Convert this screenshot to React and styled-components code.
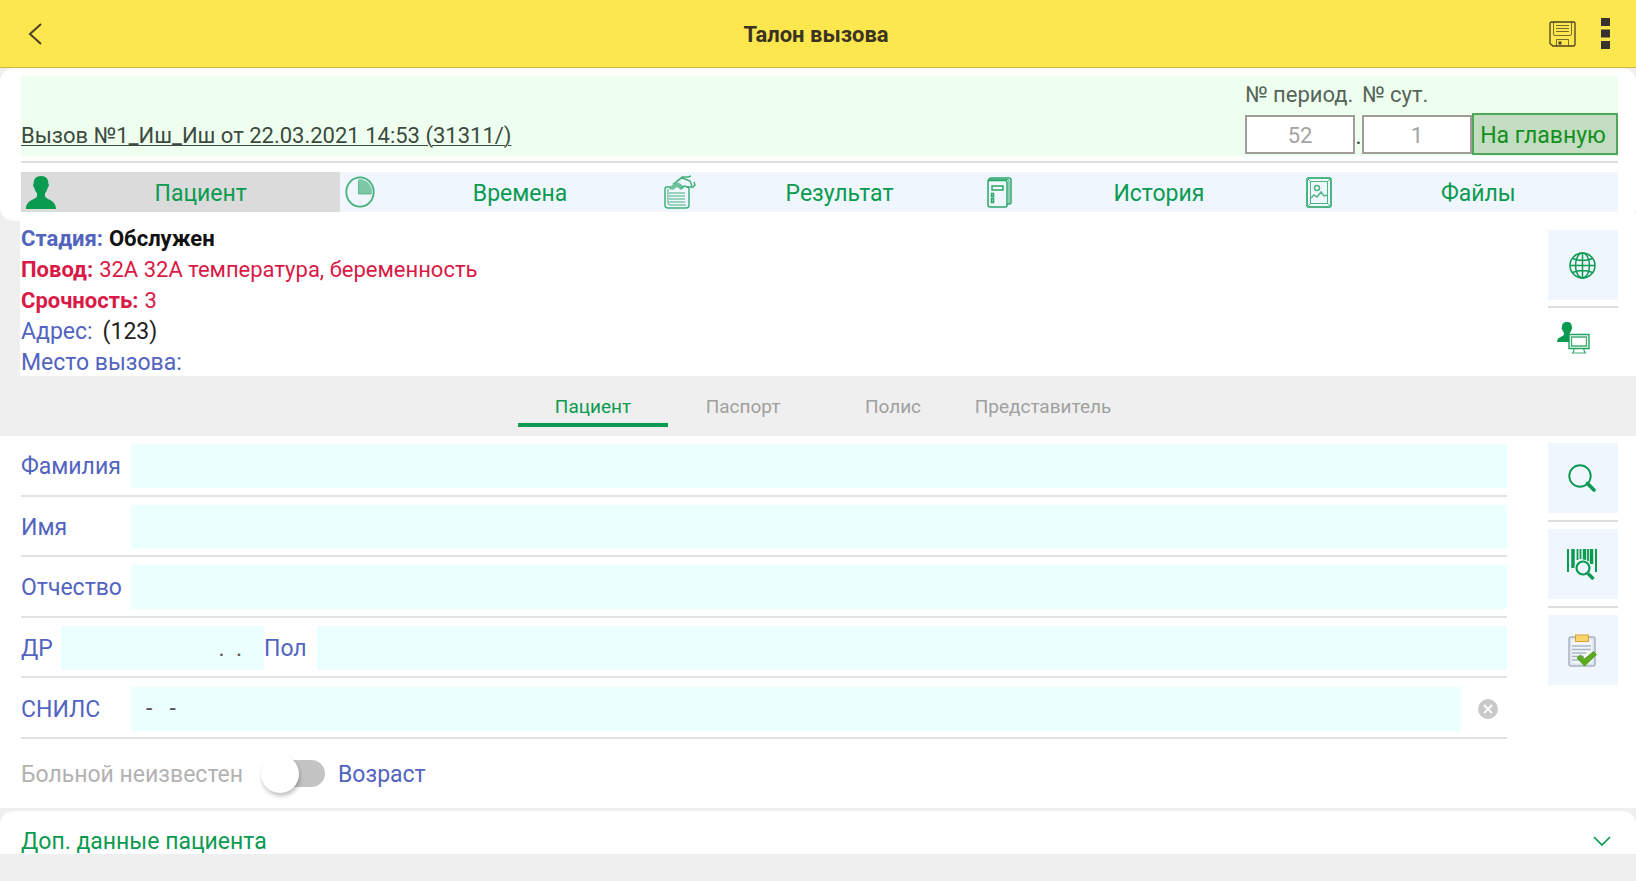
import React from "react";
import styled, { createGlobalStyle, css } from "styled-components";

const GREEN = "#0a9a50";
const BLUE = "#5264c0";
const RED = "#d91a46";

const Global = createGlobalStyle`
  *, *::before, *::after { box-sizing: border-box; }
  body {
    margin: 0;
    min-height: 100vh;
    background: #efefef;
    font-family: Roboto, "Open Sans", sans-serif;
    font-size: 23px;
    color: #3c4a40;
  }
  button, input { font: inherit; color: inherit; margin: 0; border: 0; padding: 0; border-radius: 0; background: none; }
  button { cursor: pointer; }
  svg { display: block; flex: none; }
`;

const AppBar = styled.header`
  display: grid;
  grid-template-columns: 1fr auto 1fr;
  align-items: center;
  height: 68px;
  padding: 0 26px 0 22px;
  background: #fde74f;
  border-bottom: 1px solid #cfb648;
`;
const Title = styled.h1`
  margin: 0;
  padding-top: 2px;
  font-size: 22px;
  font-weight: 700;
  color: #3b3322;
`;
const BarButton = styled.button`
  justify-self: start;
  display: flex;
  padding: 0 6px;
  color: #4c4022;
`;
const BarActions = styled.div`
  justify-self: end;
  display: flex;
  align-items: center;
  gap: 19px;
`;
const MenuButton = styled(BarButton)`
  padding: 0;
  color: #38322f;
`;

const CallCard = styled.section`
  padding: 8px 18px 9px 21px;
  background: #fff;
  border-radius: 14px;
`;
const CallHead = styled.div`
  display: flex;
  justify-content: space-between;
  align-items: flex-end;
  height: 80px;
  background: #efffef;
`;
const CallLink = styled.a`
  padding-bottom: 6px;
  font-size: 22px;
  line-height: 28px;
  color: #3c4a40;
  text-decoration: underline;
  text-decoration-thickness: 1px;
  text-underline-offset: 2px;
`;
const Numbers = styled.div`
  display: flex;
  align-items: flex-end;
  padding-bottom: 1px;
`;
const NumberField = styled.label`
  display: flex;
  flex-direction: column;
  gap: 6px;
  width: 110px;
  padding-bottom: 1px;
  font-size: 22px;
  line-height: 28px;
  white-space: nowrap;
  color: #56645a;
`;
const NumberInput = styled.input`
  width: 100%;
  height: 39px;
  padding-top: 2px;
  background: #fff;
  border: 2px solid #a19c9a;
  text-align: center;
  color: #a3a3a3;
`;
const Dot = styled.span`
  width: 7px;
  line-height: 36px;
  text-align: center;
`;
const HomeButton = styled.button`
  width: 146px;
  height: 42px;
  padding: 2px 4px 0 0;
  background: #c3ddc2;
  border: 2px solid #4fa85a;
  color: #12901c;
`;
const Rule = styled.hr`
  margin: 5px 0 0;
  border: 0;
  border-top: 2px solid #dedede;
`;
const MainTabs = styled.nav`
  display: grid;
  grid-template-columns: repeat(5, 1fr);
  margin-top: 9px;
  background: #eff6fe;
`;
const MainTab = styled.button`
  display: flex;
  align-items: center;
  height: 40px;
  color: ${GREEN};
  background: ${(p) => (p.$active ? "#dbdbdb" : "transparent")};
`;
const TabIcon = styled.span`
  display: flex;
  justify-content: center;
  width: 40px;
`;
const TabText = styled.span`
  flex: 1;
  padding-top: 2px;
`;

const Info = styled.section`
  display: flex;
  justify-content: space-between;
  height: 163px;
  margin: -8px 0 0 20px;
  padding: 10px 18px 0 1px;
  background: #fff;
`;
const Facts = styled.dl`
  margin: 0;
  line-height: 31px;
`;
const Fact = styled.div`
  display: flex;
  gap: ${(p) => (p.$plain ? 10 : 6)}px;
  font-size: ${(p) => (p.$plain ? 23 : 22)}px;
  color: ${(p) => p.$color};
`;
const Term = styled.dt`
  font-weight: ${(p) => (p.$bold ? 700 : 400)};
`;
const Value = styled.dd`
  margin: 0;
  font-weight: ${(p) => (p.$bold ? 700 : 400)};
  color: ${(p) => p.$color || "inherit"};
`;

const SideColumn = styled.div`
  display: flex;
  flex-direction: column;
  width: 70px;
  padding-top: 7px;
`;
const SideButton = styled.button`
  display: flex;
  align-items: center;
  justify-content: center;
  height: 70px;
  padding: 0 2px 0 0;
  color: ${GREEN};
  background: ${(p) => (p.$plain ? "transparent" : "#eff6fe")};
  ${(p) => p.$plain && css`height: 60px; padding-right: 20px;`}
`;
const SideRule = styled.hr`
  width: 100%;
  margin: ${(p) => (p.$tight ? "6px 0 0" : "7px 0")};
  border: 0;
  border-top: 2px solid #dedede;
`;

const SubTabs = styled.nav`
  display: flex;
  justify-content: center;
  height: 60px;
  padding: 10px 0 9px;
`;
const SubTab = styled.button`
  width: 150px;
  padding-top: 4px;
  font-size: 19px;
  color: ${(p) => (p.$active ? GREEN : "#a0a0a0")};
  border-bottom: 4px solid ${(p) => (p.$active ? GREEN : "transparent")};
`;

const FormPanel = styled.section`
  display: flex;
  justify-content: space-between;
  min-height: 372px;
  padding: 0 18px 0 21px;
  background: #fff;
`;
const Form = styled.form`
  flex: 1;
  margin-right: 41px;
`;
const Rows = styled.div`
  display: grid;
  grid-template-rows: repeat(5, 1fr);
  min-height: 303px;
`;
const Row = styled.div`
  display: flex;
  align-items: center;
  padding-top: 2px;
  border-bottom: 2px solid #e3e1e1;
`;
const Label = styled.label`
  width: ${(p) => (p.$w ? p.$w : 110)}px;
  padding-top: 1px;
  color: ${BLUE};
`;
const Field = styled.input`
  flex: 1;
  min-width: 0;
  height: 44px;
  padding: 0 15px;
  background: #ecffff;
  color: #555;
`;
const DateField = styled(Field)`
  flex: none;
  width: 203px;
  padding-right: 22px;
  text-align: right;
`;
const ClearButton = styled.button`
  display: flex;
  justify-content: center;
  width: 46px;
  padding-left: 8px;
`;
const SwitchRow = styled.div`
  display: flex;
  align-items: center;
  height: 69px;
`;
const SwitchLabel = styled.label`
  width: 240px;
  padding-top: 2px;
  color: #b2b2b2;
`;
const Switch = styled.input`
  appearance: none;
  display: flex;
  align-items: center;
  width: 52px;
  height: 27px;
  margin: 0 13px 0 12px;
  border-radius: 14px;
  background: #c4c4c4;
  &::before {
    content: "";
    width: 38px;
    height: 38px;
    flex: none;
    margin-left: -12px;
    border-radius: 50%;
    background: #fff;
    box-shadow: 1px 3px 4px rgba(0, 0, 0, 0.25);
  }
`;
const AgeLabel = styled.span`
  padding-top: 2px;
  color: ${BLUE};
`;

const Extra = styled.button`
  display: flex;
  justify-content: space-between;
  align-items: center;
  width: 100%;
  height: 43px;
  margin-top: 3px;
  padding: 18px 25px 0 21px;
  overflow: hidden;
  line-height: 28px;
  color: ${GREEN};
  background: #fff;
  border-radius: 14px 14px 0 0;
`;

const line = { fill: "none", stroke: "currentColor" };

const BackIcon = () => (
  <svg width="15" height="22" viewBox="0 0 15 22" {...line} strokeWidth="2"><path d="M13 1 2 11l11 10" /></svg>
);
const SaveIcon = () => (
  <svg width="27" height="26" viewBox="0 0 27 26" {...line}>
    <path d="M2.500 1h22a1.500 1.500 0 0 1 1.500 1.500v21a1.500 1.500 0 0 1-1.500 1.500H4L1 22.500v-20A1.500 1.500 0 0 1 2.500 1Z" strokeWidth="1.300" />
    <path d="M4.500 1v12q0 1.500 1.500 1.500h15q1.500 0 1.500-1.500V1M7 4.500h13M7 7.500h13M7 10.500h13M7.500 25v-6.500h12V25" strokeWidth="1" opacity=".75" />
    <path d="M9.500 20.500h3v3h-3z" fill="currentColor" stroke="none" />
  </svg>
);
const DotsIcon = () => (
  <svg width="9" height="31" viewBox="0 0 9 31" fill="currentColor"><path d="M0 0h9v8H0zM0 11.500h9v8H0zM0 23h9v8H0z" /></svg>
);
const PersonIcon = () => (
  <svg width="30" height="33" viewBox="0 0 30 33" fill="currentColor">
    <path d="M15 0c5 0 7.500 3 7.300 7.500 1 .5.700 3.500-.6 4.200-.6 3-1.700 4.400-2.700 5.500v3c1.500 3.800 10.500 3 11 12.800H0c.5-9.800 9.500-9 11-12.800v-3c-1-1.100-2.100-2.500-2.700-5.500-1.300-.7-1.600-3.700-.6-4.200C7.500 3 10 0 15 0Z" />
  </svg>
);
const ClockIcon = () => (
  <svg width="30" height="32" viewBox="0 0 30 32" {...line}>
    <ellipse cx="15" cy="16" rx="13.700" ry="14.700" strokeWidth="1.800" opacity=".75" />
    <path d="M13.500 3v15H27C28 9 21 2.500 13.500 3Z" fill="currentColor" stroke="none" opacity=".5" />
    <path d="M13.500 5v13H26" strokeWidth="1" opacity=".5" />
  </svg>
);
const ResultIcon = () => (
  <svg width="32" height="34" viewBox="0 0 32 34" {...line} strokeWidth="1.500" opacity=".75">
    <path d="M7 12H3q-2 0-2 2v16q0 3 3 3h18q3 0 3-3V14q0-2-2-2h-1" />
    <path d="M4 14v14q0 2 2 2h16M5 18h16M5 21h16M5 24h16M5 27h16" strokeWidth="1" />
    <path d="M9 9l6-4 3-3h6l3-1M13 6q4-4 8-2l5 2 2 5M17 13l3-2 4 1h3l1-2M30 7l1 3-3 3" />
    <path d="M5 14l3-4 5-3 4 2 3 4-3 2-4-3-4 3z" fill="currentColor" stroke="none" opacity=".75" />
  </svg>
);
const HistoryIcon = () => (
  <svg width="25" height="31" viewBox="0 0 25 31" {...line} strokeWidth="1.500" opacity=".85">
    <path d="M1 5q0-1.500 1.500-1.500h16q1.500 0 1.500 1.500v23q0 2-2 2H3q-2 0-2-2V5q0-4 4-4h17q2 0 2 2v22q0 2-2 2h-2" />
    <path d="M3 2.300h17q2 0 2 2V26" strokeWidth="1" />
    <path d="M5 9h11v4H5zM4.500 16.500h2v3h-2zM4.500 21.500h2v4h-2z" />
  </svg>
);
const FilesIcon = () => (
  <svg width="26" height="31" viewBox="0 0 26 31" {...line} strokeWidth="1.500" opacity=".7">
    <rect x="1" y="1" width="24" height="29" rx="2" strokeWidth="2" />
    <rect x="4.500" y="4.500" width="17" height="22" strokeWidth="1" />
    <path d="M1 1l4 4M25 1l-4 4M1 30l4-4M25 30l-4-4" strokeWidth="1" />
    <circle cx="11" cy="11" r="2.500" />
    <path d="M5 21l3-3 3 2 4-5 3 4 4-1" />
  </svg>
);
const GlobeIcon = () => (
  <svg width="27" height="27" viewBox="0 0 27 27" {...line} strokeWidth="1.500">
    <circle cx="13.500" cy="13.500" r="12.500" />
    <ellipse cx="13.500" cy="13.500" rx="7" ry="12.500" />
    <path d="M13.500 1v25M1 13.500h25M3.500 6.500q10 4 20 0M3.500 20.500q10-4 20 0" />
  </svg>
);
const WorkstationIcon = () => (
  <svg width="33" height="32" viewBox="0 0 33 32" {...line}>
    <path d="M10 0c3.500 0 5 2 4.800 5 .7.500.4 2.200-.4 2.700-.4 1.800-1 2.500-1.600 3.200V20H0c.3-5.500 6-5 7-7.500v-1.800C6.300 10 5.700 9 5.400 7.700c-.8-.5-1.100-2.200-.4-2.700C5 2 6.500 0 10 0Z" fill="currentColor" stroke="none" />
    <path d="M12 12.500h20v14H12z" fill="#fff" strokeWidth="1.400" opacity=".9" />
    <path d="M14.500 15h15v9h-15z" strokeWidth="1.300" opacity=".8" />
    <path d="M17 27v1.500l-1.500 2.500h13L27 28.500V27" strokeWidth="1.200" opacity=".8" />
  </svg>
);
const SearchIcon = () => (
  <svg width="28" height="28" viewBox="0 0 28 28" {...line}>
    <circle cx="12" cy="12" r="10.700" strokeWidth="1.900" />
    <path d="M19.500 19.500 26 26" strokeWidth="3.600" strokeLinecap="round" />
  </svg>
);
const BarcodeIcon = () => (
  <svg width="30" height="32" viewBox="0 0 30 32" {...line}>
    <path d="M1 1v23M29 1v23" strokeWidth="2" />
    <path d="M6 1v19M24.500 1v15" strokeWidth="3.500" />
    <path d="M10.500 1v11M13.500 1v10M21 1v12" strokeWidth="1.800" />
    <path d="M17.500 1v11" strokeWidth="3.400" />
    <circle cx="16" cy="20" r="8.500" fill="#eff6fe" stroke="none" />
    <circle cx="16" cy="20" r="6.500" strokeWidth="2.200" />
    <path d="M21 25.500 26.500 31" strokeWidth="3.400" />
  </svg>
);
const ChecklistIcon = () => (
  <svg width="29" height="33" viewBox="0 0 29 33" fill="none">
    <rect x="1" y="3" width="26" height="29" rx="2" fill="#dbe4ec" stroke="#a8b4bf" strokeWidth="1.500" />
    <path d="M3.500 5.500h21v24h-21z" fill="#f1f5f8" />
    <path d="M4 12h19M4 15.500h19M4 19h14M4 22.500h12M4 26h8" stroke="#a9b8c4" strokeWidth="1.300" />
    <rect x="7.500" y="1" width="13" height="6.500" fill="#f7d568" stroke="#d5a23a" />
    <path d="m9 24 3.500-3 4 4 9-7.500 3 3L16.500 32Z" fill="#5cab1e" stroke="#4a931a" strokeWidth=".8" />
  </svg>
);
const ClearIcon = () => (
  <svg width="20" height="20" viewBox="0 0 20 20">
    <circle cx="10" cy="10" r="10" fill="#c9c9c9" />
    <path d="m6 6 8 8m0-8-8 8" stroke="#fff" strokeWidth="2" />
  </svg>
);
const DownIcon = () => (
  <svg width="18" height="14" viewBox="0 0 18 14" {...line} strokeWidth="1.700"><path d="m1 2 8 8 8-8" /></svg>
);

const tabs = [
  ["Пациент", PersonIcon],
  ["Времена", ClockIcon],
  ["Результат", ResultIcon],
  ["История", HistoryIcon],
  ["Файлы", FilesIcon],
];
const subTabs = ["Пациент", "Паспорт", "Полис", "Представитель"];

export default function App() {
  return (
    <>
      <Global />
      <AppBar>
        <BarButton aria-label="Назад"><BackIcon /></BarButton>
        <Title>Талон вызова</Title>
        <BarActions>
          <BarButton aria-label="Сохранить"><SaveIcon /></BarButton>
          <MenuButton aria-label="Меню"><DotsIcon /></MenuButton>
        </BarActions>
      </AppBar>
      <main>
        <CallCard>
          <CallHead>
            <CallLink href="#call">Вызов №1_Иш_Иш от 22.03.2021 14:53 (31311/)</CallLink>
            <Numbers>
              <NumberField>№ период.<NumberInput defaultValue="52" /></NumberField>
              <Dot>.</Dot>
              <NumberField>№ сут.<NumberInput defaultValue="1" /></NumberField>
              <HomeButton>На главную</HomeButton>
            </Numbers>
          </CallHead>
          <Rule />
          <MainTabs>
            {tabs.map(([name, Icon], i) => (
              <MainTab key={name} $active={i === 0}>
                <TabIcon><Icon /></TabIcon>
                <TabText>{name}</TabText>
              </MainTab>
            ))}
          </MainTabs>
        </CallCard>
        <Info>
          <Facts>
            <Fact $color={BLUE}><Term $bold>Стадия:</Term><Value $bold $color="#111">Обслужен</Value></Fact>
            <Fact $color={RED}><Term $bold>Повод:</Term><Value>32А 32А температура, беременность</Value></Fact>
            <Fact $color={RED}><Term $bold>Срочность:</Term><Value>3</Value></Fact>
            <Fact $color={BLUE} $plain><Term>Адрес:</Term><Value $color="#222">(123)</Value></Fact>
            <Fact $color={BLUE} $plain><Term>Место вызова:</Term></Fact>
          </Facts>
          <SideColumn>
            <SideButton aria-label="Карта"><GlobeIcon /></SideButton>
            <SideRule $tight />
            <SideButton $plain aria-label="Рабочее место"><WorkstationIcon /></SideButton>
          </SideColumn>
        </Info>
        <SubTabs>
          {subTabs.map((name, i) => <SubTab key={name} $active={i === 0}>{name}</SubTab>)}
        </SubTabs>
        <FormPanel>
          <Form>
            <Rows>
              <Row><Label htmlFor="surname">Фамилия</Label><Field id="surname" /></Row>
              <Row><Label htmlFor="name">Имя</Label><Field id="name" /></Row>
              <Row><Label htmlFor="patronymic">Отчество</Label><Field id="patronymic" /></Row>
              <Row>
                <Label htmlFor="birth" $w={40}>ДР</Label>
                <DateField id="birth" defaultValue=".  ." />
                <Label htmlFor="sex" $w={53}>Пол</Label>
                <Field id="sex" />
              </Row>
              <Row>
                <Label htmlFor="snils">СНИЛС</Label>
                <Field id="snils" defaultValue="-   -" />
                <ClearButton type="button" aria-label="Очистить"><ClearIcon /></ClearButton>
              </Row>
            </Rows>
            <SwitchRow>
              <SwitchLabel htmlFor="unknown">Больной неизвестен</SwitchLabel>
              <Switch id="unknown" type="checkbox" role="switch" />
              <AgeLabel>Возраст</AgeLabel>
            </SwitchRow>
          </Form>
          <SideColumn>
            <SideButton aria-label="Поиск"><SearchIcon /></SideButton>
            <SideRule />
            <SideButton aria-label="Поиск по штрихкоду"><BarcodeIcon /></SideButton>
            <SideRule />
            <SideButton aria-label="Проверка"><ChecklistIcon /></SideButton>
          </SideColumn>
        </FormPanel>
        <Extra>Доп. данные пациента<DownIcon /></Extra>
      </main>
    </>
  );
}
